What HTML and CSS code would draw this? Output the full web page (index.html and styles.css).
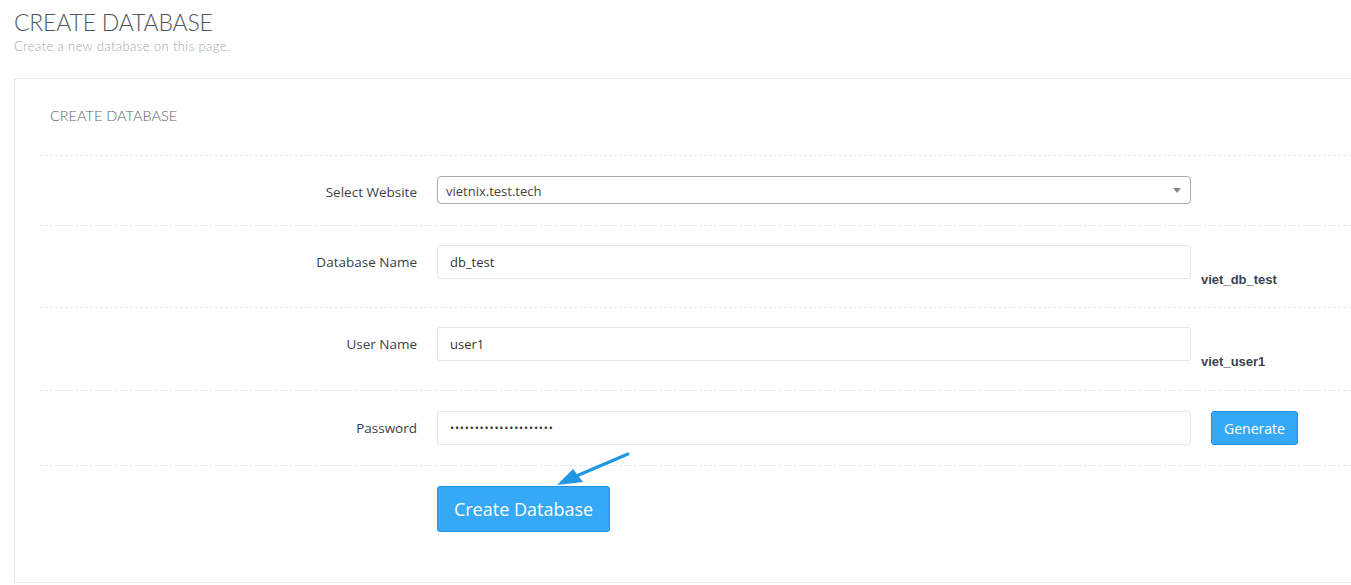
FILE: index.html
```html
<!DOCTYPE html>
<html lang="en">
<head>
<meta charset="utf-8">
<title>Create Database</title>
<link rel="stylesheet" href="styles.css">
</head>
<body>
<div class="page">
  <div class="page-head">
    <h1 class="page-title">CREATE DATABASE</h1>
    <p class="page-sub">Create a new database on this page.</p>
  </div>
  <div class="card">
    <div class="card-head">CREATE DATABASE</div>
    <form class="form">
      <div class="row row-select">
        <label class="lbl">Select Website</label>
        <div class="select">
          <span class="select-text">vietnix.test.tech</span>
          <span class="select-arrow"></span>
        </div>
      </div>
      <div class="row row-suffix">
        <label class="lbl">Database Name</label>
        <div class="input">db_test</div>
        <div class="suffix">viet_db_test</div>
      </div>
      <div class="row row-suffix row-user">
        <label class="lbl">User Name</label>
        <div class="input">user1</div>
        <div class="suffix">viet_user1</div>
      </div>
      <div class="row row-pass">
        <label class="lbl">Password</label>
        <div class="input input-pass">•••••••••••••••••••••</div>
        <button type="button" class="btn btn-gen">Generate</button>
      </div>
      <div class="row row-actions">
        <span></span>
        <div class="actions">
          <button type="button" class="btn btn-create">Create Database</button>
          <svg class="arrow" width="90" height="50" viewBox="0 0 90 50">
            <line x1="78" y1="4" x2="24" y2="27" stroke="#1f97e2" stroke-width="3" stroke-linecap="round"/>
            <polygon points="7,35 23,19 33,32" fill="#1f97e2"/>
          </svg>
        </div>
      </div>
    </form>
  </div>
</div>
</body>
</html>
```

FILE: styles.css
```css
html, body {
  margin: 0;
  padding: 0;
  background: #ffffff;
  overflow: hidden;
}
body {
  font-family: "Open Sans", "Liberation Sans", sans-serif;
  color: #333;
}
.page {
  padding: 0 0 0 14px;
}
.page-head {
  padding-top: 8px;
  height: 70px;
}
.page-title {
  margin: 0;
  font-family: Lato, "Open Sans", sans-serif;
  font-weight: 300;
  font-size: 23px;
  line-height: 28px;
  letter-spacing: -0.2px;
  color: #4f5560;
}
.page-sub {
  margin: 2px 0 0;
  font-family: Lato, "Open Sans", sans-serif;
  font-weight: 300;
  font-size: 13px;
  line-height: 16px;
  letter-spacing: 0.4px;
  color: #a3a6ab;
}
.card {
  border: 1px solid #e4e5e7;
  border-right: none;
  border-radius: 3px 0 0 3px;
  margin-right: -20px;
  padding: 0 0 50px 25px;
  background: #fff;
}
.card-head {
  box-sizing: border-box;
  height: 76px;
  display: flex;
  align-items: center;
  padding: 0 0 4px 10px;
  font-family: Lato, "Open Sans", sans-serif;
  font-weight: 300;
  font-size: 14.5px;
  color: #5b6068;
}
.row {
  display: grid;
  grid-template-columns: 377px 754px auto;
  column-gap: 20px;
  align-items: start;
  border-top: 1px dashed #e6e7e9;
  padding: 19px 0 0;
}
.row-select {
  padding: 20px 0 21px;
}
.row-user {
  padding-bottom: 1px;
}
.row-pass {
  padding: 20px 0 20px;
}
.row-actions {
  padding-top: 20px;
}
.lbl {
  text-align: right;
  font-size: 13.5px;
  line-height: 34px;
  color: #3a3f49;
}
.row-select .lbl {
  line-height: 32px;
  height: 28px;
}
.select {
  box-sizing: border-box;
  height: 28px;
  border: 1px solid #aaaaaa;
  border-radius: 4px;
  display: flex;
  align-items: center;
  justify-content: space-between;
  padding: 1px 9px 0 8px;
  font-size: 13px;
  color: #444;
  background: #fff;
}
.select-arrow {
  width: 0;
  height: 0;
  border-left: 4px solid transparent;
  border-right: 4px solid transparent;
  border-top: 5px solid #888;
}
.input {
  box-sizing: border-box;
  height: 34px;
  border: 1px solid #e5e6e8;
  border-radius: 3px;
  padding: 0 12px;
  font-size: 13px;
  line-height: 32px;
  color: #333;
  background: #fff;
}
.input-pass {
  font-size: 11px;
  letter-spacing: 0.8px;
  color: #333;
}
.suffix {
  margin-left: -10px;
  padding-top: 26px;
  height: 36px;
  font-family: "Liberation Sans", Arial, sans-serif;
  font-weight: bold;
  font-size: 13px;
  line-height: 17px;
  color: #3d4452;
}
.btn {
  font-family: "Open Sans", "Liberation Sans", sans-serif;
  color: #fff;
  background: #35a9f6;
  border: 1px solid #1f93df;
  border-radius: 3px;
  cursor: pointer;
  padding: 0;
}
.btn-gen {
  width: 87px;
  height: 34px;
  font-size: 14px;
}
.actions {
  position: relative;
}
.btn-create {
  display: block;
  width: 173px;
  height: 46px;
  font-size: 18px;
}
.arrow {
  position: absolute;
  left: 113px;
  top: -36px;
}
```
